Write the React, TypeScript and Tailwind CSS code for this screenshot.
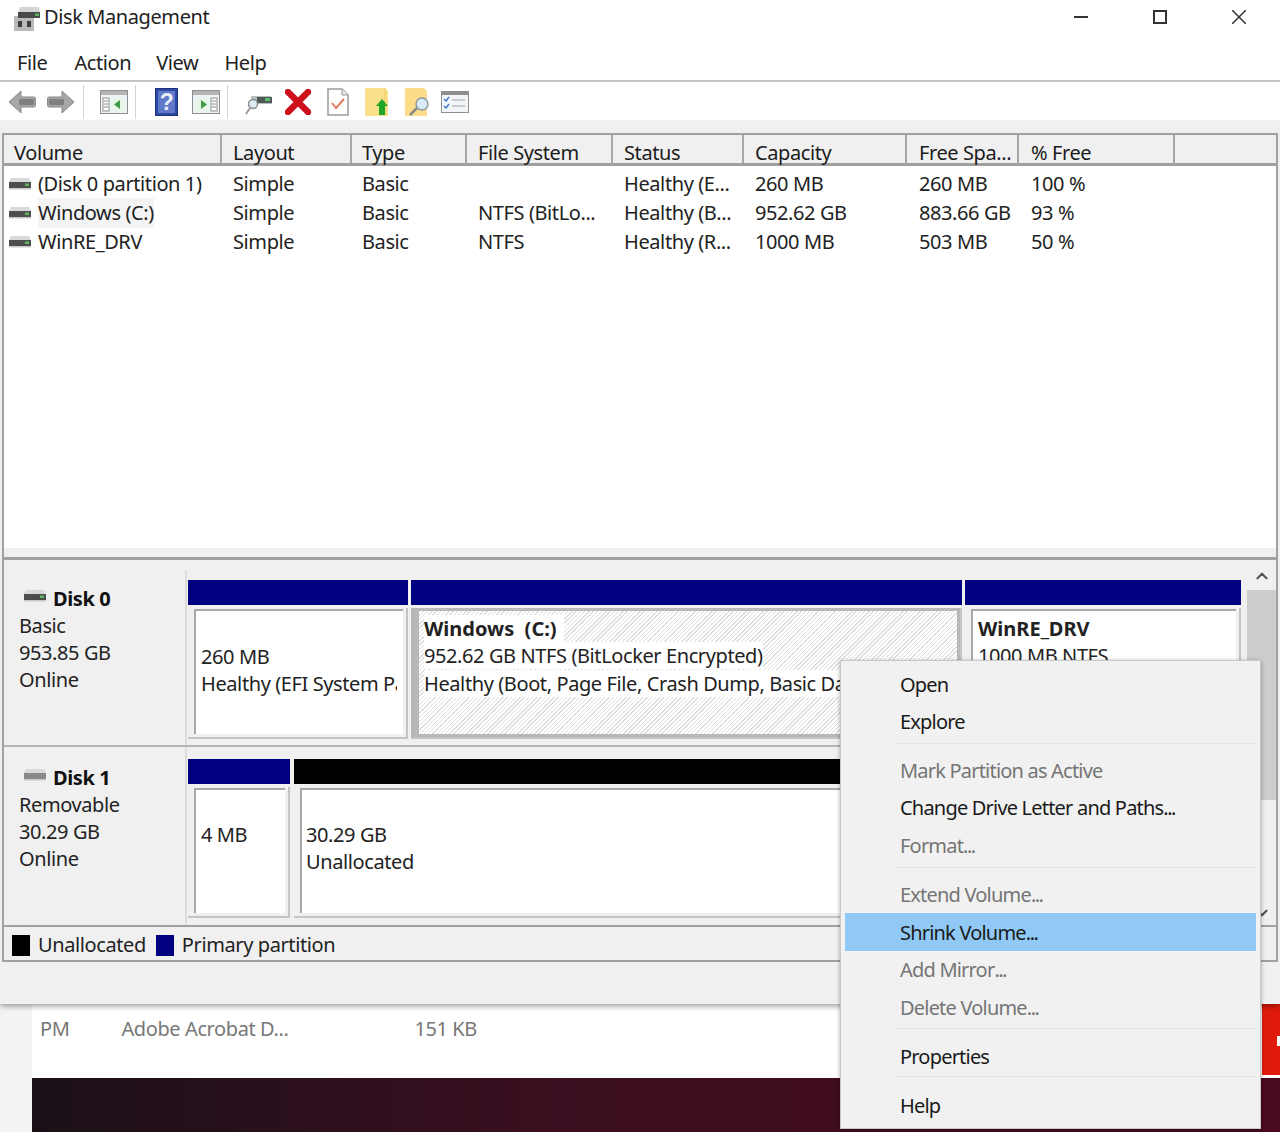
// Disk Management window with the volume context menu open
import type { ReactNode } from "react";
import { ChevronDown, ChevronUp } from "lucide-react";

const FONT = "font-['Noto_Sans','Open_Sans',sans-serif]";

type Column = { label: string; width: string };

const COLUMNS: Column[] = [
  { label: "Volume", width: "w-[218px] pl-[10px]" },
  { label: "Layout", width: "w-[130px] pl-[11px]" },
  { label: "Type", width: "w-[115px] pl-[10px]" },
  { label: "File System", width: "w-[146px] pl-[11px]" },
  { label: "Status", width: "w-[131px] pl-[11px]" },
  { label: "Capacity", width: "w-[163px] pl-[11px]" },
  { label: "Free Spa...", width: "w-[112px] pl-[12px]" },
  { label: "% Free", width: "w-[156px] pl-[12px]" },
];

const ROWS = [
  ["(Disk 0 partition 1)", "Simple", "Basic", "", "Healthy (E...", "260 MB", "260 MB", "100 %"],
  ["Windows (C:)", "Simple", "Basic", "NTFS (BitLo...", "Healthy (B...", "952.62 GB", "883.66 GB", "93 %"],
  ["WinRE_DRV", "Simple", "Basic", "NTFS", "Healthy (R...", "1000 MB", "503 MB", "50 %"],
];

function DriveIcon({ dim = false }: { dim?: boolean }) {
  return (
    <svg width="24" height="14" viewBox="0 0 24 14" className="shrink-0">
      <path d="M3 1h18l2 4H1z" fill="#d9d9d9" />
      <rect x="1" y="5" width="22" height="6" fill={dim ? "#8a8a8a" : "#4d4d4d"} />
      {!dim && <rect x="17" y="6.500" width="4" height="2.500" fill="#5fb55f" />}
      <rect x="1" y="11" width="22" height="1.500" fill="#c8c8c8" />
    </svg>
  );
}

function TitleIcon() {
  return (
    <svg width="28" height="28" viewBox="0 0 28 28" className="shrink-0">
      <rect x="1" y="13" width="20" height="15" fill="#b9b9b9" />
      <rect x="5" y="18" width="4" height="6" fill="#3d3d3d" />
      <rect x="14" y="18" width="4" height="6" fill="#3d3d3d" />
      <path d="M7 4h19l1 6H5z" fill="#d4d4d4" />
      <rect x="5" y="9" width="22" height="6" fill="#4a4a4a" />
      <rect x="22" y="10.500" width="4" height="2.500" fill="#57b657" />
    </svg>
  );
}

function ArrowIcon({ flip = false }: { flip?: boolean }) {
  return (
    <svg width="28" height="26" viewBox="0 0 28 26" className={flip ? "-scale-x-100" : ""}>
      <path d="M1 13 13 2v6h13a1.500 1.500 0 0 1 1.500 1.500v7A1.500 1.500 0 0 1 26 18H13v6z" fill="#a6a6a6" stroke="#8a8a8a" />
      <rect x="11" y="10" width="15" height="6" rx="1" fill="#7f7f7f" />
    </svg>
  );
}

function PaneIcon({ side }: { side: "left" | "right" }) {
  const paneX = side === "left" ? 3 : 19;
  const mainX = side === "left" ? 10 : 3;
  return (
    <svg width="28" height="24" viewBox="0 0 28 24">
      <rect x="0.500" y="0.500" width="27" height="23" fill="#eef3f6" stroke="#8f8f8f" />
      <rect x="1" y="1" width="26" height="4" fill="#b5b5b5" />
      <rect x={mainX} y="8" width="15" height="13" fill="#eaf5ea" />
      <rect x={paneX} y="8" width="6" height="13" fill="#fff" stroke="#8f8f8f" />
      <path d="M4 11h4M4 14h4M4 17h4" stroke="#888" transform={side === "left" ? "" : "translate(16 0)"} />
      {side === "left" ? (
        <path d="M20 10v9l-6-4.500z" fill="#3f9b45" />
      ) : (
        <path d="M9 10v9l6-4.500z" fill="#3f9b45" />
      )}
    </svg>
  );
}

function ToolSep() {
  return <div className="h-[34px] w-px bg-[#d4d4d4]" />;
}

function Toolbar() {
  return (
    <div className="flex h-[38px] items-center bg-white pt-[2px]">
      <div className="ml-[8px] flex w-[69px] items-center gap-[11px]">
        <ArrowIcon />
        <ArrowIcon flip />
      </div>
      <div className="ml-[6px]"><ToolSep /></div>
      <div className="ml-[16px]"><PaneIcon side="left" /></div>
      <div className="ml-[7px]"><ToolSep /></div>
      <svg width="23" height="28" viewBox="0 0 23 28" className="ml-[19px]">
        <rect x="0.500" y="0.500" width="22" height="27" fill="#2a4aa6" stroke="#1d2f78" />
        <rect x="3" y="3" width="17" height="22" fill="#5f79c8" />
        <text x="11.500" y="22" textAnchor="middle" fontSize="23" fontWeight="700" fill="#e8ecf8" fontFamily="Liberation Sans">?</text>
      </svg>
      <div className="ml-[14px]"><PaneIcon side="right" /></div>
      <div className="ml-[7px]"><ToolSep /></div>
      <svg width="28" height="28" viewBox="0 0 28 28" className="ml-[17px]">
        <path d="M6 8h20l1 8H7z" fill="#b7bcc0" />
        <rect x="12" y="9" width="15" height="6" fill="#4d5a55" />
        <rect x="20" y="10" width="5" height="3" fill="#5fbf6c" />
        <circle cx="8" cy="16" r="4.500" fill="#d9ecf5" stroke="#8d8d8d" strokeWidth="1.500" />
        <path d="M5 20 1 26" stroke="#9a9a9a" strokeWidth="2" />
      </svg>
      <svg width="26" height="26" viewBox="0 0 26 26" className="ml-[12px]">
        <path d="M3 3 23 23M23 3 3 23" stroke="#cf0f1c" strokeWidth="6.500" strokeLinecap="round" />
      </svg>
      <svg width="22" height="28" viewBox="0 0 22 28" className="ml-[16px]">
        <path d="M1 1h14l6 6v20H1z" fill="#fff" stroke="#9a9a9a" strokeWidth="1.500" />
        <path d="M15 1v6h6" fill="#e8e8e8" stroke="#9a9a9a" />
        <path d="m5 15 4 5 8-9" fill="none" stroke="#e27a5a" strokeWidth="2" />
      </svg>
      <svg width="24" height="28" viewBox="0 0 24 28" className="ml-[16px]">
        <path d="M0 0h20l3 3v25H0z" fill="#fbe08a" />
        <path d="M20 0v28" stroke="#efc85f" />
        <path d="M17 11l6 7h-3v9h-6v-9h-3z" fill="#22a52b" />
      </svg>
      <svg width="25" height="28" viewBox="0 0 25 28" className="ml-[16px]">
        <path d="M0 0h19l3 3v25H0z" fill="#fbdc88" />
        <circle cx="17" cy="16" r="6" fill="#d8ecf5" stroke="#8d9aa0" strokeWidth="1.500" />
        <path d="M12 20 5 27" stroke="#8a8a8a" strokeWidth="2.500" />
      </svg>
      <svg width="28" height="22" viewBox="0 0 28 22" className="ml-[11px]">
        <rect x="0.500" y="0.500" width="27" height="21" fill="#f3f6f9" stroke="#8f8f8f" />
        <rect x="1" y="1" width="26" height="3" fill="#8f8f8f" />
        <path d="m3 8 2 2 3-4M3 15l2 2 3-4" fill="none" stroke="#3a6fc9" strokeWidth="1.300" />
        <path d="M11 9h13M11 15h13" stroke="#a0a0a0" />
      </svg>
    </div>
  );
}

function VolumeTable() {
  return (
    <div className="mx-[2px] flex h-[415px] flex-col border-2 border-b-0 border-[#a0a0a0] bg-white">
      <div className="flex h-[31px] shrink-0 border-b-[3px] border-[#a0a0a0] bg-[#f0f0f0] text-[#1c1c1c]">
        {COLUMNS.map((col) => (
          <div key={col.label} className={`${col.width} flex shrink-0 items-center border-r-2 border-[#a8a8a8] pt-[7px]`}>
            {col.label}
          </div>
        ))}
      </div>
      <div className="pt-[3px]">
        {ROWS.map((row) => (
          <div key={row[0]} className="flex h-[29px] items-center text-[#222]">
            {row.map((cell, i) =>
              i === 0 ? (
                <div key={i} className="flex w-[218px] shrink-0 items-center gap-[6px] pl-[4px]">
                  <DriveIcon />
                  <span className={row[0] === "Windows (C:)" ? "bg-[#f4f4f4]" : ""}>{cell}</span>
                </div>
              ) : (
                <div key={i} className={`${COLUMNS[i].width} shrink-0 whitespace-nowrap`}>
                  {cell}
                </div>
              ),
            )}
          </div>
        ))}
      </div>
    </div>
  );
}

function DiskInfo({ name, lines, dim, className }: { name: string; lines: string[]; dim?: boolean; className: string }) {
  return (
    <div className={`${className} w-[183px] shrink-0 border-r-2 border-[#dcdcdc] pl-[15px] leading-[27px] text-[#222]`}>
      <div className="flex items-center gap-[6px] font-bold text-[#111]">
        <span className="-mt-[6px] ml-[4px]"><DriveIcon dim={dim} /></span>
        {name}
      </div>
      {lines.map((line) => (
        <div key={line}>{line}</div>
      ))}
    </div>
  );
}

function Partition({
  width,
  bar,
  boxClass = "border-[#a8a8a8] bg-white",
  outerClass = "",
  height,
  children,
}: {
  width: string;
  bar: string;
  boxClass?: string;
  outerClass?: string;
  height: string;
  children: ReactNode;
}) {
  return (
    <div className={`${width} shrink-0`}>
      <div className={`h-[25px] ${bar}`} />
      <div className={`${height} mt-[3px] border-r-2 border-b-2 border-[#c4c4c4] pt-[1px] pr-[3px] pb-[3px] pl-[6px] ${outerClass}`}>
        <div className={`flex h-full flex-col overflow-hidden whitespace-nowrap border-t-2 border-l-2 pl-[5px] leading-[27px] text-[#222] ${boxClass}`}>
          {children}
        </div>
      </div>
    </div>
  );
}

function DiskArea() {
  return (
    <div className="mx-[2px] flex h-[365px] border-x-2 border-[#a0a0a0] bg-[#f0f0f0]">
      <div className="w-[1243px] shrink-0 pt-[10px]">
        <div className="flex h-[177px] border-b-2 border-[#b4b4b4] pt-[10px]">
          <DiskInfo className="-mt-[10px] pt-[15px]" name="Disk 0" lines={["Basic", "953.85 GB", "Online"]} />
          <div className="ml-px flex gap-[3px]">
            <Partition width="w-[220px]" bar="bg-[#000080]" height="h-[131px]">
              <div className="mt-[32px]">260 MB</div>
              <div className="w-[196px] overflow-hidden">Healthy (EFI System Partition)</div>
            </Partition>
            <Partition
              width="w-[551px]"
              bar="bg-[#000080]"
              height="h-[131px]"
              outerClass="border-[#b8b8b8] bg-[#b8b8b8]"
              boxClass="border-[#b8b8b8] bg-[repeating-linear-gradient(135deg,#dedede_0,#dedede_1px,#ffffff_1px,#ffffff_3px)]"
            >
              <div className="mt-[4px] w-fit bg-white pr-[7px] font-bold tracking-normal">Windows&nbsp; (C:)</div>
              <div className="w-fit bg-white">952.62 GB NTFS (BitLocker Encrypted)</div>
              <div className="mt-px w-fit bg-white">Healthy (Boot, Page File, Crash Dump, Basic Data Partition)</div>
            </Partition>
            <Partition width="w-[276px]" bar="bg-[#000080]" height="h-[131px]">
              <div className="mt-[4px] font-bold tracking-normal">WinRE_DRV</div>
              <div>1000 MB NTFS</div>
            </Partition>
          </div>
        </div>
        <div className="flex h-[178px] pt-[12px]">
          <DiskInfo className="-mt-[12px] pt-[17px]" name="Disk 1" dim lines={["Removable", "30.29 GB", "Online"]} />
          <div className="ml-px flex gap-[4px]">
            <Partition width="w-[102px]" bar="bg-[#000080]" height="h-[131px]">
              <div className="mt-[31px]">4 MB</div>
            </Partition>
            <Partition width="w-[947px]" bar="bg-black" height="h-[131px]">
              <div className="mt-[31px] -ml-px">30.29 GB</div>
              <div className="-ml-px">Unallocated</div>
            </Partition>
          </div>
        </div>
      </div>
      <div className="flex w-[29px] shrink-0 flex-col items-center">
        <ChevronUp size={18} strokeWidth={3} className="mt-[7px] text-[#555]" />
        <div className="mt-[5px] h-[210px] w-full bg-[#cdcdcd]" />
        <ChevronDown size={18} strokeWidth={3} className="mt-auto mb-[3px] text-[#555]" />
      </div>
    </div>
  );
}

function MenuItem({ label, off, active, low }: { label: string; off?: boolean; active?: boolean; low?: boolean }) {
  // the dots after a menu label sit tight together, as in Segoe UI
  const hasDots = label.endsWith("...");
  const text = hasDots ? label.slice(0, -3) : label;
  return (
    <div
      className={`flex h-[37.500px] items-center pl-[55px] ${low ? "pt-[2px]" : ""} ${off ? "text-[#757575]" : "text-[#1a1a1a]"} ${active ? "bg-[#90c8f6]" : ""}`}
    >
      <span>
        {text}
        {hasDots && <span className="tracking-[-1.500px]">...</span>}
      </span>
    </div>
  );
}

function MenuSep({ className }: { className: string }) {
  return <div className={`${className} ml-[50px] h-px bg-[#e4e4e4]`} />;
}

function ContextMenu() {
  return (
    <div className="absolute top-[660px] left-[840px] z-20 w-[421px] border border-[#c8c8c8] bg-[#f1f1f1] px-[4px] pt-[5px] pb-[3px] tracking-[-0.8px] shadow-[0_1px_4px_rgba(0,0,0,0.35)]">
      <MenuItem label="Open" />
      <MenuItem label="Explore" />
      <MenuSep className="mt-[2px] mb-[8px]" />
      <MenuItem label="Mark Partition as Active" off />
      <MenuItem label="Change Drive Letter and Paths..." />
      <MenuItem label="Format..." off />
      <MenuSep className="mt-[2px] mb-[8px]" />
      <MenuItem label="Extend Volume..." off low />
      <MenuItem label="Shrink Volume..." active low />
      <MenuItem label="Add Mirror..." off low />
      <MenuItem label="Delete Volume..." off low />
      <MenuSep className="mt-[2px] mb-[10px]" />
      <MenuItem label="Properties" />
      <MenuSep className="mb-[10px]" />
      <MenuItem label="Help" />
    </div>
  );
}

export default function App() {
  return (
    <div className={`${FONT} relative h-[1132px] w-[1280px] overflow-hidden bg-white text-[20px] tracking-[-0.4px]`}>
      <div className="relative z-10 h-[1004px] bg-[#f0f0f0] shadow-[0_2px_6px_rgba(0,0,0,0.4)]">
        <div className="flex h-[34px] items-center bg-white">
          <div className="ml-[13px] mr-[3px]"><TitleIcon /></div>
          <span className="text-[#222]">Disk Management</span>
          <div className="ml-auto flex items-center">
            <div className="mr-[65px] h-[2px] w-[14px] bg-[#333]" />
            <div className="mr-[65px] h-[14px] w-[14px] border-2 border-[#333]" />
            <svg width="14" height="14" viewBox="0 0 14 14" className="mr-[34px]">
              <path d="m0 0 14 14M14 0 0 14" stroke="#333" strokeWidth="1.500" />
            </svg>
          </div>
        </div>
        <div className="flex h-[48px] items-center border-b-2 border-[#c4c4c4] bg-white pt-[12px] pl-[17px] text-[#222]">
          <span>File</span>
          <span className="ml-[27px]">Action</span>
          <span className="ml-[25px]">View</span>
          <span className="ml-[26px]">Help</span>
        </div>
        <Toolbar />
        <div className="h-[13px]" />
        <VolumeTable />
        <div className="mx-[2px] h-[12px] border-x-2 border-b-[3px] border-[#a0a0a0] bg-[#f0f0f0]" />
        <DiskArea />
        <div className="mx-[2px] flex h-[37px] items-center border-2 border-[#a0a0a0] pt-[3px] pl-[8px] text-[#222]">
          <span className="h-[21px] w-[18px] bg-black" />
          <span className="ml-[8px]">Unallocated</span>
          <span className="ml-[10px] h-[21px] w-[18px] bg-[#000080]" />
          <span className="ml-[8px]">Primary partition</span>
        </div>
      </div>
      <div className="flex h-[128px]">
        <div className="w-[32px] shrink-0 bg-[#f3f3f3]" />
        <div className="flex min-w-0 flex-1 flex-col">
          <div className="flex h-[74px] bg-white pt-[10px] pl-[8px] text-[#777]">
            <span>PM</span>
            <span className="ml-[52px]">Adobe Acrobat D...</span>
            <span className="ml-[126px]">151 KB</span>
            <div className="ml-auto flex h-[71px] w-[18px] -mt-[10px] items-center justify-end bg-[#e01b0c]">
              <div className="mt-[2px] h-[10px] w-[3px] bg-white" />
            </div>
          </div>
          <div className="flex-1 bg-[linear-gradient(90deg,#1a1018,#3a0f20_40%,#4a0a20)]" />
        </div>
      </div>
      <ContextMenu />
    </div>
  );
}
